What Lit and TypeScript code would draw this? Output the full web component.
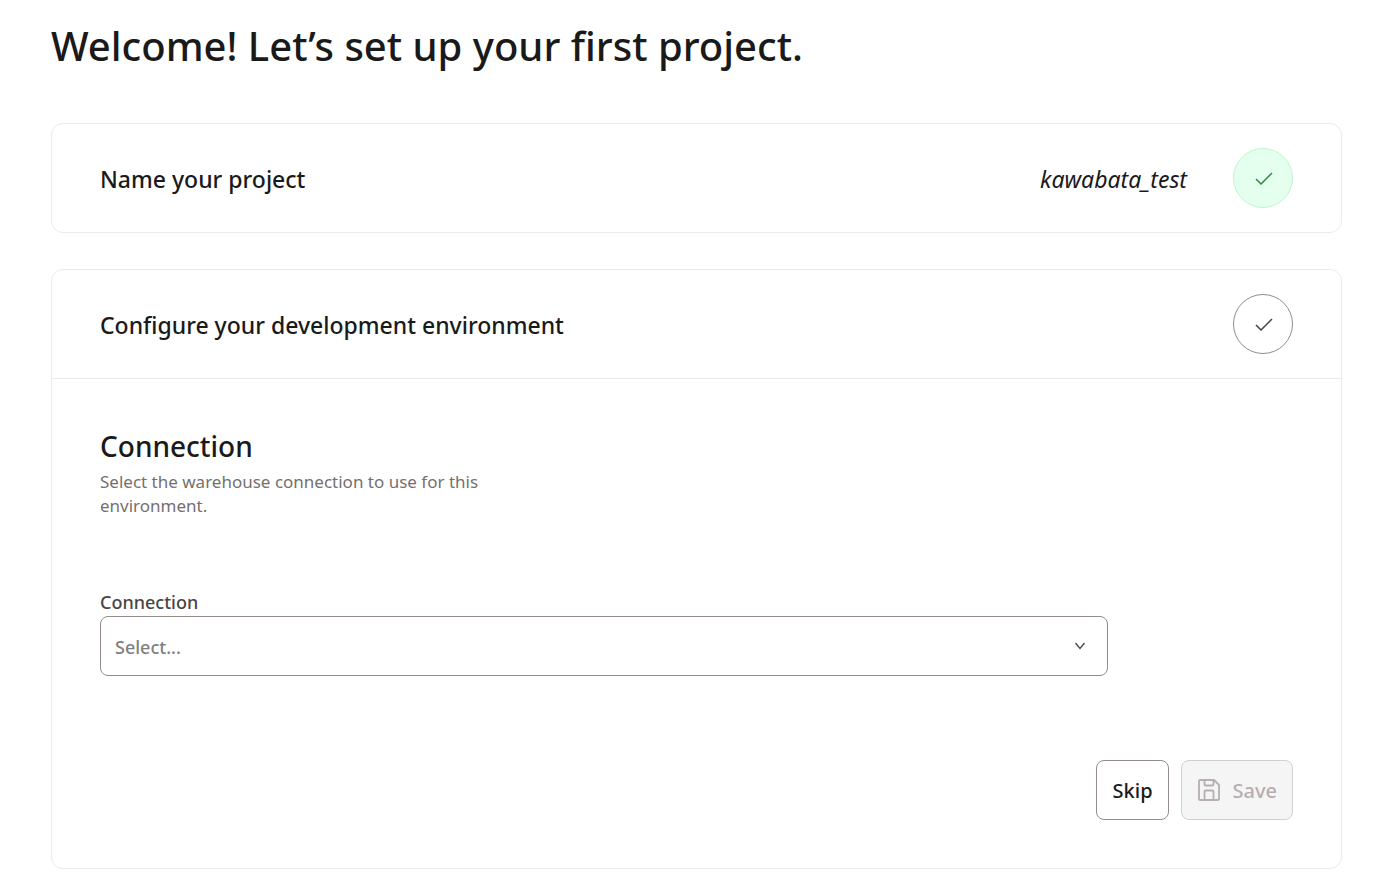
import { LitElement, html, css, svg } from "lit";
import { customElement } from "lit/decorators.js";

const check = svg`<path d="M1 7 L6 12 L17 1" />`;

@customElement("app-root")
export class AppRoot extends LitElement {
  static styles = css`
    :host { display: block; font-family: "Noto Sans", "Open Sans", sans-serif; color: #1a1a1a; background: #fff; min-height: 100vh; }
    *, *::before, *::after { box-sizing: border-box; }
    h1, h2, h3, p { margin: 0; }
    main { padding: 16px 38px 15px 51px; }
    h1 { font-size: 40px; line-height: 60px; font-weight: 500; margin-bottom: 47px; }
    .card { border: 1px solid #ebebeb; border-radius: 12px; }
    .card + .card { margin-top: 36px; }
    .head { display: flex; align-items: center; padding: 24px 48px; gap: 46px; }
    .head h2, .name { font-size: 23px; line-height: 32px; padding-top: 2px; }
    .head h2 { flex: 1; font-weight: 500; }
    .name { font-style: italic; }
    .status { width: 60px; height: 60px; border-radius: 50%; border: 1px solid #958c8c; display: grid; place-items: center; color: #444; padding: 1px 0 0 1px; }
    .status.done { background: #e5ffee; border-color: #bff5d0; color: #2b8a47; }
    svg { fill: none; stroke: currentColor; display: block; }
    .body { border-top: 1px solid #ebebeb; padding: 48px; }
    .intro { max-width: 400px; }
    h3 { font-size: 28px; line-height: 38px; font-weight: 500; }
    .intro p { font-size: 17px; line-height: 24px; color: #757070; margin-top: 5px; }
    .field { margin-top: 72px; max-width: 1008px; }
    label { display: block; font-size: 18px; line-height: 24px; font-weight: 500; color: #4a4545; padding-bottom: 2px; }
    .select { display: grid; align-items: center; }
    select { grid-area: 1 / 1; appearance: none; width: 100%; height: 60px; border: 1px solid #958c8c; border-radius: 8px; background: #fff; padding: 1px 14px 0; font: 500 18px/26px "Noto Sans", sans-serif; color: #808080; }
    .select svg { grid-area: 1 / 1; justify-self: end; margin-right: 22px; color: #444; pointer-events: none; }
    .actions { display: flex; justify-content: flex-end; gap: 12px; margin-top: 84px; }
    button { height: 60px; padding: 2px 15px 0 16px; border: 1px solid #958c8c; border-radius: 8px; background: #fff; color: #1a1a1a; font: 500 20px/28px "Noto Sans", sans-serif; display: flex; align-items: center; gap: 13px; }
    button:disabled { background: #f5f5f5; border-color: #d0d0d0; color: #b5afaf; }
    button svg { margin-bottom: 2px; }
  `;

  render() {
    return html`
      <main>
        <h1>Welcome! Let’s set up your first project.</h1>
        <section class="card">
          <div class="head">
            <h2>Name your project</h2>
            <span class="name">kawabata_test</span>
            <span class="status done"><svg width="18" height="13" viewBox="0 0 18 13" stroke-width="1.5">${check}</svg></span>
          </div>
        </section>
        <section class="card">
          <div class="head">
            <h2>Configure your development environment</h2>
            <span class="status"><svg width="18" height="13" viewBox="0 0 18 13" stroke-width="1.5">${check}</svg></span>
          </div>
          <div class="body">
            <div class="intro">
              <h3>Connection</h3>
              <p>Select the warehouse connection to use for this environment.</p>
            </div>
            <div class="field">
              <label for="connection">Connection</label>
              <div class="select">
                <select id="connection"><option>Select...</option></select>
                <svg width="12" height="8" viewBox="0 0 12 8" stroke-width="1.3"><path d="M1.5 1 L6 6.5 L10.5 1" /></svg>
              </div>
            </div>
            <div class="actions">
              <button type="button">Skip</button>
              <button type="button" disabled>
                <svg width="22" height="22" viewBox="0 0 22 22" stroke-width="1.8" stroke-linejoin="round"><path d="M2 1H16L21 6V20Q21 21 20 21H2Q1 21 1 20V2Q1 1 2 1Z M6.5 1V5.5Q6.5 6.5 7.5 6.5H14.5Q15.5 6.5 15.5 5.5V1 M6.5 21V12.5Q6.5 11.5 7.5 11.5H14.5Q15.5 11.5 15.5 12.5V21" /></svg>
                Save
              </button>
            </div>
          </div>
        </section>
      </main>
    `;
  }
}
